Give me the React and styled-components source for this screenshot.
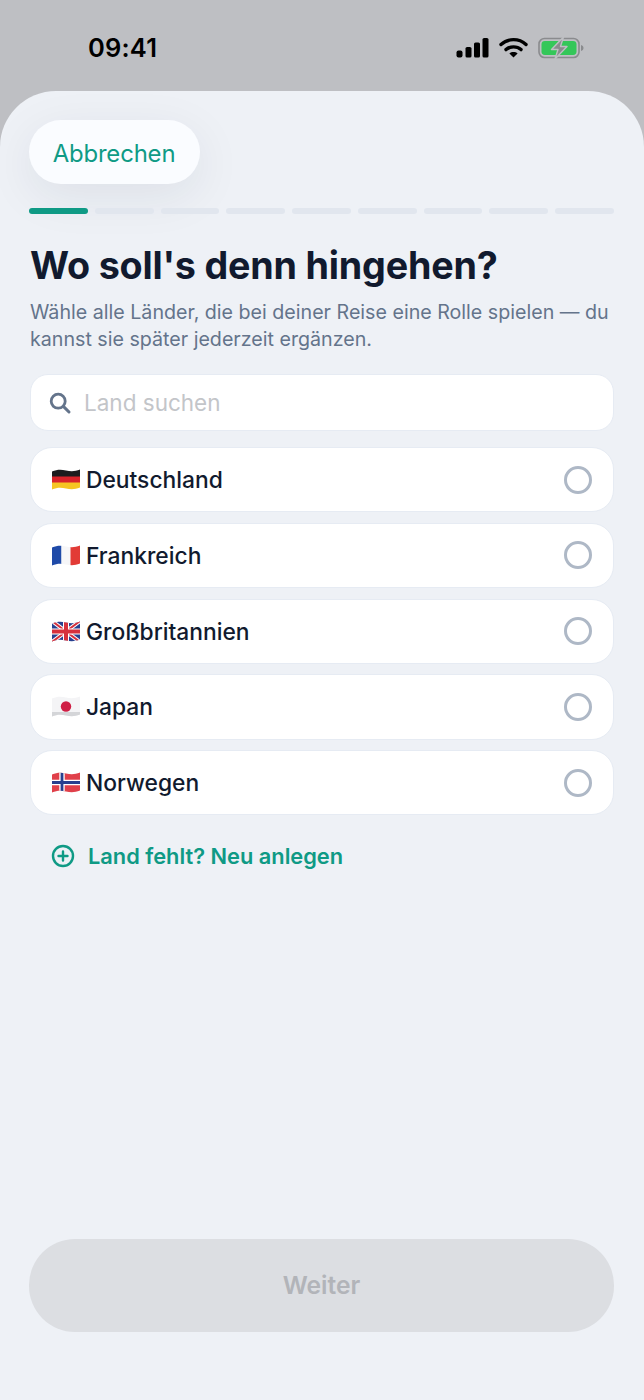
import styled, { createGlobalStyle } from "styled-components";

const COUNTRIES = [
  { key: "de", name: "Deutschland" },
  { key: "fr", name: "Frankreich" },
  { key: "gb", name: "Großbritannien" },
  { key: "jp", name: "Japan" },
  { key: "no", name: "Norwegen" },
];

const STEPS = 9;

const WAVE = "M0 2.5C5 0.5 9 0.5 14 1.5S23 2.5 28 0.5V18.5C23 20.5 19 20.5 14 19.5S5 18.5 0 20.5Z";

function Flag({ code }) {
  const clip = `flag-${code}`;
  return (
    <FlagSvg viewBox="0 0 28 21">
      <defs>
        <clipPath id={clip}>
          <path d={WAVE} />
        </clipPath>
      </defs>
      <g clipPath={`url(#${clip})`}>
        {code === "de" && (
          <>
            <rect width="28" height="8" fill="#1c1c1e" />
            <rect y="7.5" width="28" height="6.5" fill="#d8232a" />
            <rect y="13.5" width="28" height="8" fill="#f6c522" />
          </>
        )}
        {code === "fr" && (
          <>
            <rect width="9.5" height="21" fill="#1f4aa8" />
            <rect x="9.5" width="9" height="21" fill="#f6f6f8" />
            <rect x="18.5" width="9.5" height="21" fill="#e23b36" />
          </>
        )}
        {code === "gb" && (
          <>
            <rect width="28" height="21" fill="#27408f" />
            <path d="M0 0L28 21M28 0L0 21" stroke="#fff" strokeWidth="4" />
            <path d="M0 0L28 21M28 0L0 21" stroke="#d6303c" strokeWidth="2" />
            <path d="M14 0V21M0 10.5H28" stroke="#fff" strokeWidth="6" />
            <path d="M14 0V21M0 10.5H28" stroke="#d6303c" strokeWidth="4" />
          </>
        )}
        {code === "jp" && (
          <>
            <rect width="28" height="21" fill="#f4f4f6" />
            <path d="M0 16H28V21H0Z" fill="#d4d5d8" />
            <circle cx="14" cy="10.5" r="5.2" fill="#cf1f45" />
          </>
        )}
        {code === "no" && (
          <>
            <rect width="28" height="21" fill="#e0404a" />
            <path d="M10 0V21M0 10.5H28" stroke="#fff" strokeWidth="5.4" />
            <path d="M10 0V21M0 10.5H28" stroke="#27408f" strokeWidth="2.8" />
          </>
        )}
      </g>
    </FlagSvg>
  );
}

export default function App() {
  return (
    <>
      <GlobalStyle />
      <Screen>
        <StatusBar>
          <Clock>09:41</Clock>
          <StatusIcons>
            <svg width="33" height="21" viewBox="0 0 33 21">
              <rect x="0.5" y="13.5" width="6" height="7" rx="2" fill="#000" />
              <rect x="9.5" y="10" width="6" height="10.5" rx="1.6" fill="#000" />
              <rect x="18" y="5.5" width="6" height="15" rx="1.6" fill="#000" />
              <rect x="26.5" y="1" width="6" height="19.5" rx="1.6" fill="#000" />
            </svg>
            <svg width="29" height="21" viewBox="0 0 29 21" fill="none">
              <path d="M2 7.5C9 1 20 1 27 7.5" stroke="#000" strokeWidth="3.4" strokeLinecap="round" />
              <path d="M7 12.6C11 9 18 9 22 12.6" stroke="#000" strokeWidth="3.4" strokeLinecap="round" />
              <path d="M14.5 20.5L10.4 16.4C12.6 14.6 16.4 14.6 18.6 16.4Z" fill="#000" />
            </svg>
            <svg width="46" height="22" viewBox="0 0 46 22" fill="none">
              <rect x="1" y="1.5" width="40" height="19" rx="5.5" stroke="#8a8b8e" strokeWidth="1.6" />
              <rect x="3.5" y="4" width="35" height="14" rx="3.4" fill="#34c759" />
              <path d="M43 8V14C44.5 13.6 45.5 12.5 45.5 11S44.5 8.4 43 8Z" fill="#8a8b8e" />
              <path d="M25.5 0L13.5 12.5H20L17 22L29 9.5H22.5Z" fill="#8a8b8e" stroke="#bebfc3" strokeWidth="1.4" strokeLinejoin="round" />
            </svg>
          </StatusIcons>
        </StatusBar>

        <Sheet>
          <CancelButton>Abbrechen</CancelButton>
          <Progress>
            {Array.from({ length: STEPS }, (_, i) => (
              <Step key={i} $active={i === 0} />
            ))}
          </Progress>

          <Title>Wo soll's denn hingehen?</Title>
          <Subtitle>Wähle alle Länder, die bei deiner Reise eine Rolle spielen — du kannst sie später jederzeit ergänzen.</Subtitle>

          <SearchBox>
            <svg width="24" height="24" viewBox="0 0 24 24" fill="none">
              <circle cx="10.2" cy="10.2" r="7" stroke="#64748b" strokeWidth="2.8" />
              <path d="M15.6 15.6L21 21" stroke="#64748b" strokeWidth="3" strokeLinecap="round" />
            </svg>
            <SearchInput placeholder="Land suchen" />
          </SearchBox>

          <List>
            {COUNTRIES.map(({ key, name }) => (
              <Row key={key}>
                <Flag code={key} />
                <RowName>{name}</RowName>
                <Radio />
              </Row>
            ))}
          </List>

          <AddLink>
            <svg width="24" height="24" viewBox="0 0 24 24" fill="none">
              <circle cx="12" cy="12" r="10" stroke="#0f9a85" strokeWidth="2.4" />
              <path d="M12 7.5V16.5M7.5 12H16.5" stroke="#0f9a85" strokeWidth="2.4" strokeLinecap="round" />
            </svg>
            Land fehlt? Neu anlegen
          </AddLink>

          <NextButton disabled>Weiter</NextButton>
        </Sheet>
      </Screen>
    </>
  );
}

const GlobalStyle = createGlobalStyle`
  html, body { margin: 0; padding: 0; background: #bebfc3; }
  * { box-sizing: border-box; }
  body { font-family: Inter, "Liberation Sans", sans-serif; }
`;

const Screen = styled.div`
  width: 644px; height: 1400px; display: flex; flex-direction: column;
  background: #bebfc3; overflow: hidden;
`;

const StatusBar = styled.div`
  height: 91px; flex-shrink: 0; display: flex; align-items: flex-start; justify-content: space-between;
  padding: 31px 60px 0 88px;
`;
const Clock = styled.div`font-size: 25.5px; line-height: 33px; font-weight: 600; color: #000; letter-spacing: 0.2px;`;
const StatusIcons = styled.div`display: flex; align-items: center; gap: 10px; height: 33px;`;

const Sheet = styled.main`
  flex: 1; display: flex; flex-direction: column; padding: 29px 30px 68px 30px;
  background: #eef1f6; border-radius: 56px 56px 0 0;
`;

const CancelButton = styled.button`
  width: 171px; height: 64px; margin-left: -1px; padding: 2px 1px 0 0; border: none; border-radius: 32px;
  background: #fafcff; color: #0f9a85; font: 400 23.9px Inter, sans-serif; letter-spacing: -0.15px;
  box-shadow: 0 12px 48px rgba(30, 41, 59, 0.08);
`;

const Progress = styled.div`display: flex; gap: 7px; margin: 24px 0 0 -1px; width: 585px;`;
const Step = styled.div`
  flex: 1; height: 6px; border-radius: 3px;
  background: ${({ $active }) => ($active ? "#0f9a85" : "#e1e6ee")};
`;

const Title = styled.h1`
  margin: 28px 0 0; font-size: 37.7px; line-height: 46px; font-weight: 700; color: #111a2e; letter-spacing: -0.2px;
`;
const Subtitle = styled.p`
  margin: 11px 0 0; font-size: 19.65px; line-height: 27px; color: #64748b; letter-spacing: 0;
`;

const SearchBox = styled.div`
  height: 57px; margin-top: 21px; display: flex; align-items: center; gap: 12px; padding: 0 17px;
  background: #fff; border: 1.5px solid #e6ebf3; border-radius: 18px;
`;
const SearchInput = styled.input`
  flex: 1; min-width: 0; border: none; outline: none; background: transparent; padding: 0;
  font: 400 22.5px Inter, sans-serif; color: #111a2e;
  &::placeholder { color: #c3c5c9; opacity: 1; }
`;

const List = styled.div`display: flex; flex-direction: column; gap: 10.6px; margin-top: 16px;`;
const Row = styled.div`
  height: 65.2px; display: flex; align-items: center; padding: 0 21.5px 0 21px;
  background: #fff; border: 1.5px solid #e6ebf3; border-radius: 22px;
`;
const FlagSvg = styled.svg`width: 28px; height: 21px; flex-shrink: 0;`;
const RowName = styled.div`flex: 1; margin-left: 6px; font-size: 22.8px; font-weight: 500; color: #111a2e;`;
const Radio = styled.div`width: 28px; height: 28px; border: 3px solid #aeb8c6; border-radius: 50%;`;

const AddLink = styled.div`
  display: flex; align-items: center; gap: 13px; margin: 28px 0 0 21px;
  font-size: 21.8px; line-height: 26px; font-weight: 600; color: #0f9a85;
`;

const NextButton = styled.button`
  margin: auto 0 0 -1px; width: 585px; height: 93px; padding: 0 0 2px; border: none; border-radius: 46px;
  background: #dcdee2; color: #b2b4b9; font: 600 24.6px Inter, sans-serif;
`;
